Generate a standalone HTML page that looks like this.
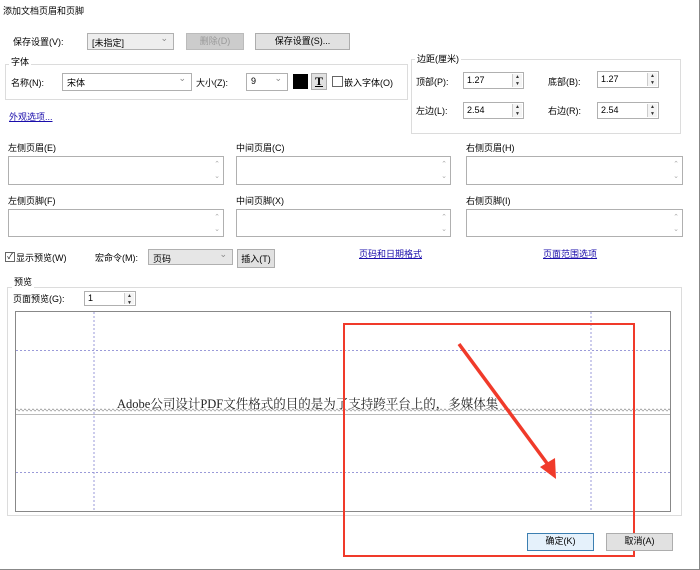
<!DOCTYPE html>
<html><head><meta charset="utf-8"><style>
body{margin:0;width:700px;height:570px;background:#fff;font-family:"Liberation Sans","Noto Sans CJK SC",sans-serif;font-size:9px;color:#000;position:relative;overflow:hidden}
.a{position:absolute;white-space:nowrap}
.in{position:absolute;background:#fff;border:1px solid #b0b0b0;box-sizing:border-box}
.sel{position:absolute;background:#fff;border:1px solid #b0b0b0;box-sizing:border-box;padding:2px 4px}
.sel:after{content:"⌄";position:absolute;right:5px;top:-1px;color:#888}
.btn{position:absolute;background:#e1e1e1;border:1px solid #adadad;box-sizing:border-box;text-align:center;line-height:15px}
.grp{position:absolute;border:1px solid #dcdcdc;box-sizing:border-box}
.lnk{color:#1a0dab;text-decoration:underline;position:absolute;white-space:nowrap}
.sp{position:absolute;right:1px;top:1px;bottom:1px;width:9px;border-left:1px solid #ccc;background:#f4f4f4;font-size:5px;line-height:7px;text-align:center;color:#333}
.ta{position:absolute;border:1px solid #b0b0b0;box-sizing:border-box;background:#fff}
.ta:after{content:"⌃\A⌄";white-space:pre;position:absolute;right:3px;top:2px;color:#aaa;font-size:7px;line-height:12px}
</style></head><body>
<div style="position:absolute;left:0;top:0;width:699px;height:569px;border-right:1px solid #888;border-bottom:1px solid #888"></div>
<div class="a" style="left:3px;top:4px">添加文档页眉和页脚</div>
<div class="a" style="left:13px;top:35px">保存设置(V):</div>
<div class="sel" style="left:87px;top:33px;width:87px;height:17px;background:#eee">[未指定]</div>
<div class="btn" style="left:186px;top:33px;width:58px;height:17px;background:#ccc;color:#999;border-color:#bbb">删除(D)</div>
<div class="btn" style="left:255px;top:33px;width:95px;height:17px">保存设置(S)...</div>
<div class="grp" style="left:5px;top:64px;width:403px;height:36px"></div>
<div class="a" style="left:9px;top:55px;background:#fff;padding:0 2px">字体</div>
<div class="a" style="left:11px;top:76px">名称(N):</div>
<div class="sel" style="left:62px;top:73px;width:130px;height:18px">宋体</div>
<div class="a" style="left:196px;top:76px">大小(Z):</div>
<div class="sel" style="left:246px;top:73px;width:42px;height:18px">9</div>
<div style="position:absolute;left:293px;top:74px;width:15px;height:15px;background:#000"></div>
<div class="btn" style="left:311px;top:73px;width:16px;height:17px;font-family:'Liberation Serif';font-weight:bold;font-size:12px;text-decoration:underline">T</div>
<div style="position:absolute;left:332px;top:76px;width:9px;height:9px;border:1px solid #666"></div>
<div class="a" style="left:344px;top:76px">嵌入字体(O)</div>
<div class="lnk" style="left:9px;top:110px">外观选项...</div>
<div class="grp" style="left:411px;top:59px;width:270px;height:75px"></div>
<div class="a" style="left:415px;top:52px;background:#fff;padding:0 2px">边距(厘米)</div>
<div class="a" style="left:416px;top:75px">顶部(P):</div>
<div class="in" style="left:463px;top:72px;width:61px;height:17px;padding:2px 3px">1.27<div class="sp">▲<br>▼</div></div>
<div class="a" style="left:548px;top:75px">底部(B):</div>
<div class="in" style="left:597px;top:71px;width:62px;height:17px;padding:2px 3px">1.27<div class="sp">▲<br>▼</div></div>
<div class="a" style="left:416px;top:104px">左边(L):</div>
<div class="in" style="left:463px;top:102px;width:61px;height:17px;padding:2px 3px">2.54<div class="sp">▲<br>▼</div></div>
<div class="a" style="left:548px;top:104px">右边(R):</div>
<div class="in" style="left:597px;top:102px;width:62px;height:17px;padding:2px 3px">2.54<div class="sp">▲<br>▼</div></div>
<div class="a" style="left:8px;top:141px">左侧页眉(E)</div>
<div class="a" style="left:236px;top:141px">中间页眉(C)</div>
<div class="a" style="left:466px;top:141px">右侧页眉(H)</div>
<div class="ta" style="left:8px;top:156px;width:216px;height:29px"></div>
<div class="ta" style="left:236px;top:156px;width:215px;height:29px"></div>
<div class="ta" style="left:466px;top:156px;width:217px;height:29px"></div>
<div class="a" style="left:8px;top:194px">左侧页脚(F)</div>
<div class="a" style="left:236px;top:194px">中间页脚(X)</div>
<div class="a" style="left:466px;top:194px">右侧页脚(I)</div>
<div class="ta" style="left:8px;top:209px;width:216px;height:28px"></div>
<div class="ta" style="left:236px;top:209px;width:215px;height:28px"></div>
<div class="ta" style="left:466px;top:209px;width:217px;height:28px"></div>
<div style="position:absolute;left:5px;top:252px;width:8px;height:8px;border:1px solid #666;font-size:8px;line-height:8px;text-align:center">✓</div>
<div class="a" style="left:16px;top:251px">显示预览(W)</div>
<div class="a" style="left:95px;top:251px">宏命令(M):</div>
<div class="sel" style="left:148px;top:249px;width:85px;height:16px;background:#e6e6e6">页码</div>
<div class="btn" style="left:237px;top:249px;width:38px;height:19px;line-height:18px">插入(T)</div>
<div class="lnk" style="left:359px;top:247px">页码和日期格式</div>
<div class="lnk" style="left:543px;top:247px">页面范围选项</div>
<div class="grp" style="left:7px;top:287px;width:675px;height:229px"></div>
<div class="a" style="left:12px;top:275px;background:#fff;padding:0 2px">预览</div>
<div class="a" style="left:13px;top:292px">页面预览(G):</div>
<div class="in" style="left:84px;top:291px;width:52px;height:15px;padding:1px 3px">1<div class="sp">▲<br>▼</div></div>
<div style="position:absolute;left:15px;top:311px;width:656px;height:201px;border:1px solid #888;box-sizing:border-box"></div>
<svg class="a" style="left:0;top:0" width="700" height="570">
<defs><pattern id="w" x="16" y="408" width="4" height="4" patternUnits="userSpaceOnUse"><path d="M0 2 Q1 0 2 2 T4 2" stroke="#999" fill="none" stroke-width="0.8"/></pattern></defs>
<g stroke="#9a9ad8" stroke-width="1" stroke-dasharray="2,2" fill="none">
<line x1="94" y1="312" x2="94" y2="511"/><line x1="591" y1="312" x2="591" y2="511"/>
<line x1="16" y1="350.5" x2="670" y2="350.5"/><line x1="16" y1="472.5" x2="670" y2="472.5"/>
</g>
<rect x="16" y="408" width="654" height="4" fill="url(#w)"/>
<line x1="16" y1="414.5" x2="670" y2="414.5" stroke="#bbb"/>
<text x="117" y="408" font-family="'Liberation Serif','Noto Serif CJK SC',serif" font-size="12.5" fill="#222">Adobe公司设计PDF文件格式的目的是为了支持跨平台上的，多媒体集</text>
<rect x="344" y="324" width="290" height="232" fill="none" stroke="#f03a2a" stroke-width="2"/>
<line x1="459" y1="344" x2="549" y2="466" stroke="#f03a2a" stroke-width="3.5"/>
<polygon points="556,479 540,467 555,458" fill="#f03a2a"/>
</svg>
<div class="btn" style="left:527px;top:533px;width:67px;height:18px;background:#e5f1fb;border-color:#3c7fb1">确定(K)</div>
<div class="btn" style="left:606px;top:533px;width:67px;height:18px">取消(A)</div>
</body></html>
